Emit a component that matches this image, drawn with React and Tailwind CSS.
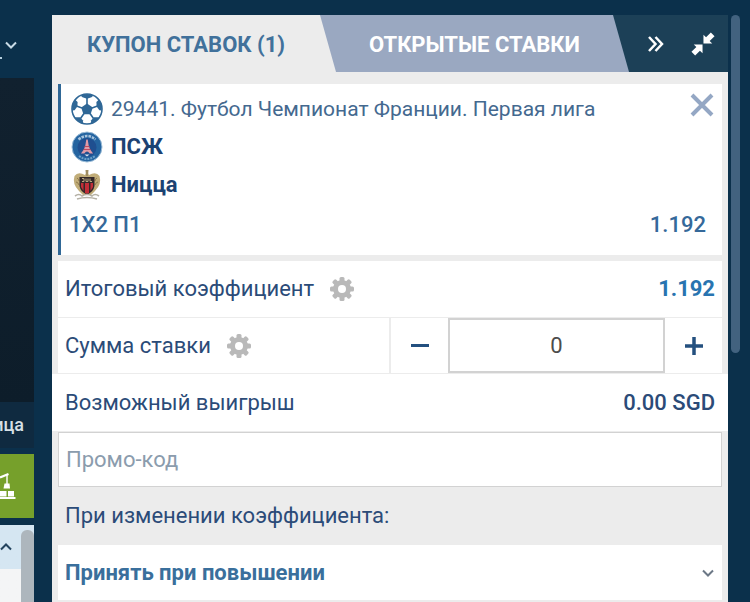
import React, { useState } from "react";

const Chevron = ({ className }) => (
  <svg viewBox="0 0 12 8" className={className} fill="none" stroke="currentColor" strokeWidth="2">
    <path d="M1 1.5 6 6.5 11 1.5" />
  </svg>
);

const GearIcon = () => (
  <svg viewBox="0 0 24 24" className="size-6 text-[#b9b9b9]">
    {[0, 45, 90, 135].map((angle) => (
      <rect
        key={angle}
        x="9.5"
        y="0"
        width="5"
        height="24"
        rx="1.5"
        fill="currentColor"
        transform={`rotate(${angle} 12 12)`}
      />
    ))}
    <circle cx="12" cy="12" r="9" fill="currentColor" />
    <circle cx="12" cy="12" r="4" fill="#fff" />
  </svg>
);

const BallIcon = () => (
  <svg viewBox="0 0 32 32" className="size-8 text-[#2f6796]">
    <circle cx="16" cy="16" r="15" fill="#fff" stroke="currentColor" strokeWidth="1.6" />
    <g fill="currentColor">
      <path d="M16 10.5 21.8 14.6 19.6 21.3H12.4L10.2 14.600Z" />
      <path d="M9.500 2.500Q16 -.5 22.500 2.500L20.500 4.200 16 5.800 11.500 4.200Z" />
      <path d="M1.200 17.500Q1 10.500 4 6.500L6.600 9 6.400 13.400 3.600 17.300Z" />
      <path d="M30.800 17.500Q31 10.500 28 6.500L25.400 9 25.600 13.400 28.400 17.300Z" />
      <path d="M3.800 24.200 9 24.200 11.800 27.200 12.200 30.500Q7.500 29.500 3.800 24.200Z" />
      <path d="M28.200 24.200 23 24.200 20.200 27.200 19.800 30.500Q24.500 29.500 28.200 24.200Z" />
    </g>
    <path
      d="M16 4v8M11 15 5.500 13M21 15 26.500 13M13 20.500 9.500 25.500M19 20.500 22.500 25.500"
      fill="none"
      stroke="currentColor"
      strokeWidth="1.6"
    />
  </svg>
);

const PsgLogo = () => (
  <svg viewBox="0 0 32 32" className="size-8">
    <circle cx="16" cy="16" r="15" fill="#2464a0" stroke="#9cbdd8" strokeWidth="1" />
    <circle cx="16" cy="16.500" r="9.500" fill="#1f4f90" />
    <path d="M7.500 8.500Q16 1.500 24.500 8.500" fill="none" stroke="#a9c4dd" strokeWidth="2.5" strokeDasharray="2.600 1" />
    <path d="M8 25Q16 31 24 25" fill="none" stroke="#6fa0c8" strokeWidth="2" strokeDasharray="2 1" />
    <path d="M15.300 8.500h1.400l1 6 1.400 4 3 4h-3.400Q16 18.500 13.300 22.500H9.900L12.900 18.500l1.400-4Z" fill="#e09aa6" />
    <path d="M13.500 15.500h5M12.500 18.500h7" stroke="#c0495f" strokeWidth="1.200" />
    <path d="M13.500 23.500h5l-2.500 2Z" fill="#d9e4ee" />
  </svg>
);

const NiceLogo = () => (
  <svg viewBox="0 0 32 32" className="size-8">
    <path
      d="M16 3 18 6Q25 2 28.500 7 31 15 24 22L20 26H12L8 22Q1 15 3.500 7 7 2 14 6Z"
      fill="#c1ad79"
    />
    <path d="M14.500 1h3l-.5 6h-2Z" fill="#a08d62" />
    <path d="M6 9q2 1 2 3M5 13q2 0 3 3M26 9q-2 1-2 3M27 13q-2 0-3 3" fill="none" stroke="#907b4c" />
    <path d="M8.500 8h15v9q-1 6-7.500 8.500Q9.500 23 8.500 17Z" fill="#332829" />
    <path d="M10 14h2.500v8L10 18ZM14 14h4v10l-2 .7-2-.7ZM19.500 14H22v4l-2.500 4Z" fill="#c22e38" />
    <path d="M11 9.500h2v3h-2M15 9.500v3h2v-3M19 9.500v3h2" fill="none" stroke="#b9a780" />
    <path d="M4 27q4-3 7 0 5-3 10 0 3-3 7 0M6 30q10-3 20 0" fill="none" stroke="#b5b1a6" strokeWidth="1.6" />
  </svg>
);

const CollapseIcon = () => (
  <svg viewBox="0 0 26 26" className="size-6" fill="currentColor">
    <path d="M13.500 3v9.500H23l-2.800-2.800 5.300-5.200L21.500.500l-5.200 5.300ZM12.500 23v-9.500H3l2.800 2.800-5.300 5.200 4 4 5.200-5.300Z" />
  </svg>
);

const CraneIcon = () => (
  <svg viewBox="0 0 20 28" className="h-7 w-5" fill="none" stroke="#fff">
    <path d="M0 5.500 8.500 2" strokeWidth="2.200" />
    <path d="M7 2v10" strokeWidth="1.400" />
    <path d="M4.500 11.500h5l.5 5H3.500ZM0 19h6.500v5.500H0ZM8 19h6v5.500H8Z" fill="#fff" stroke="none" />
    <path d="M0 26h15.500" strokeWidth="2" />
  </svg>
);

const LeftColumn = () => {
  return (
    <aside className="flex w-[34px] shrink-0 flex-col overflow-hidden">
      <div className="flex h-[78px] items-start pt-[41px]">
        <span className="mt-4 h-0.5 w-0.5 bg-[#b5cfdf]" />
        <Chevron className="ml-[3px] h-2 w-3 text-[#c8dbe6]" />
      </div>
      <div className="h-[324px] bg-linear-to-b from-[#11212f] to-[#0d1d2a]" />
      <div className="flex h-[46px] items-center justify-end bg-[#0f2a40] pr-[10px] text-lg font-medium text-[#d7e0e6]">
        <span>ица</span>
      </div>
      <div className="mt-1.5 flex h-[64px] items-center bg-[#76a02b]">
        <CraneIcon />
      </div>
      <div className="mt-[7px] flex flex-1 justify-between bg-linear-to-b from-[#d5e6f2] from-[44px] to-[#f4f5f6] to-[44px]">
        <Chevron className="mt-[18px] h-2 w-3 rotate-180 text-[#24445f]" />
        <div className="mt-[5px] w-[13px] rounded-t-md bg-[#adb6bd]" />
      </div>
    </aside>
  );
};

const BetCard = () => {
  return (
    <div className="h-[171px] border-l-3 border-[#2f6796] bg-white pr-4 text-[22px] leading-7 text-[#1c4272]">
      <div className="flex h-[44px] items-center gap-2 pt-1.5 pl-[10px]">
        <BallIcon />
        <span className="flex-1 text-[21px] whitespace-nowrap text-[#44698f]">29441. Футбол Чемпионат Франции. Первая лига</span>
        <button aria-label="Удалить" className="-mr-2 pb-2 text-[#94a7c4]">
          <svg viewBox="0 0 24 24" className="size-6" stroke="currentColor" strokeWidth="4">
            <path d="M2 2 22 22M22 2 2 22" />
          </svg>
        </button>
      </div>
      <div className="flex h-[38px] items-center gap-2 pl-[10px] font-bold">
        <PsgLogo />
        <span>ПСЖ</span>
      </div>
      <div className="flex h-[38px] items-center gap-2 pl-[10px] font-bold">
        <NiceLogo />
        <span>Ницца</span>
      </div>
      <div className="flex h-[42px] items-center justify-between pl-2 font-medium text-[#35699a]">
        <span>1X2 П1</span>
        <span>1.192</span>
      </div>
    </div>
  );
};

const App = () => {
  const [stake, setStake] = useState(0);

  return (
    <div className="flex min-h-screen bg-[#0b304b] font-['Roboto',sans-serif]">
      <LeftColumn />

      <main className="mt-[15px] ml-[18px] flex-1 bg-[#ececec] text-[22px] leading-7 text-[#2b4b78]">
        {/* Tabs */}
        <div className="flex h-[58px] pb-px font-bold">
          <button className="flex-1 pt-0.5 text-[#41719b]">КУПОН СТАВОК (1)</button>
          <button className="z-10 w-[309px] bg-[#9aa8c1] pt-0.5 text-white [clip-path:polygon(0_0,293px_0,100%_100%,16px_100%)]">
            ОТКРЫТЫЕ СТАВКИ
          </button>
          <div className="-ml-4 flex w-[115px] items-center justify-end gap-[26px] bg-[#1c4057] pr-[13px] text-white">
            <button aria-label="Свернуть вправо">
              <svg viewBox="0 0 18 18" className="size-[18px]" fill="none" stroke="currentColor" strokeWidth="2.5">
                <path d="M2 2 8.500 9 2 16M8.500 2 15 9 8.500 16" />
              </svg>
            </button>
            <button aria-label="Уменьшить">
              <CollapseIcon />
            </button>
          </div>
        </div>

        <div className="px-1.5 pt-[11px]">
          <BetCard />

          <div className="mt-1.5 flex h-[57px] items-center justify-between border-b border-[#ececec] bg-white px-[7px]">
            <div className="flex items-center gap-4">
              <span>Итоговый коэффициент</span>
              <button aria-label="Настройки коэффициента">
                <GearIcon />
              </button>
            </div>
            <span className="font-bold text-[#2874b0]">1.192</span>
          </div>

          <div className="flex h-[55px] bg-white">
            <div className="flex flex-1 items-center gap-4 border-r-2 border-[#ececec] pl-[7px]">
              <label htmlFor="stake">Сумма ставки</label>
              <button aria-label="Настройки суммы">
                <GearIcon />
              </button>
            </div>
            <button aria-label="Меньше" className="flex w-[57px] items-center justify-center" onClick={() => setStake(Math.max(0, stake - 1))}>
              <span className="h-[3px] w-[18px] bg-[#24507f]" />
            </button>
            <input
              id="stake"
              className="w-[217px] border-2 border-[#d2d2d2] text-center text-[#4c4c4c]"
              value={stake}
              onChange={(e) => setStake(Number(e.target.value) || 0)}
            />
            <button aria-label="Больше" className="flex w-[57px] items-center justify-center text-[#24507f]" onClick={() => setStake(stake + 1)}>
              <svg viewBox="0 0 18 18" className="size-[18px]" stroke="currentColor" strokeWidth="3.500">
                <path d="M0 9h18M9 0v18" />
              </svg>
            </button>
          </div>
        </div>

        <div className="mt-px flex h-[57px] items-center justify-between bg-white px-[13px]">
          <span>Возможный выигрыш</span>
          <span className="font-medium">0.00 SGD</span>
        </div>

        <div className="px-1.5 pt-px">
          <input
            aria-label="Промо-код"
            placeholder="Промо-код"
            className="block h-[55px] w-full border border-[#d2d2d2] bg-white px-[7px] placeholder:text-[#8b9cad]"
          />
          <label htmlFor="odds-change" className="flex h-[58px] items-center px-[7px]">
            При изменении коэффициента:
          </label>
          <div className="relative">
            <select id="odds-change" className="block h-[55px] w-full appearance-none bg-white px-[7px] font-bold text-[#3a6f9c]">
              <option>Принять при повышении</option>
            </select>
            <Chevron className="pointer-events-none absolute top-6 right-2 h-2 w-3 text-[#6c7886]" />
          </div>
        </div>
      </main>

      {/* Scrollbar */}
      <div className="mt-[15px] mr-[10px] ml-[3px] h-[338px] w-[9px] rounded-full bg-[#42627f]" />
    </div>
  );
};

export default App;
